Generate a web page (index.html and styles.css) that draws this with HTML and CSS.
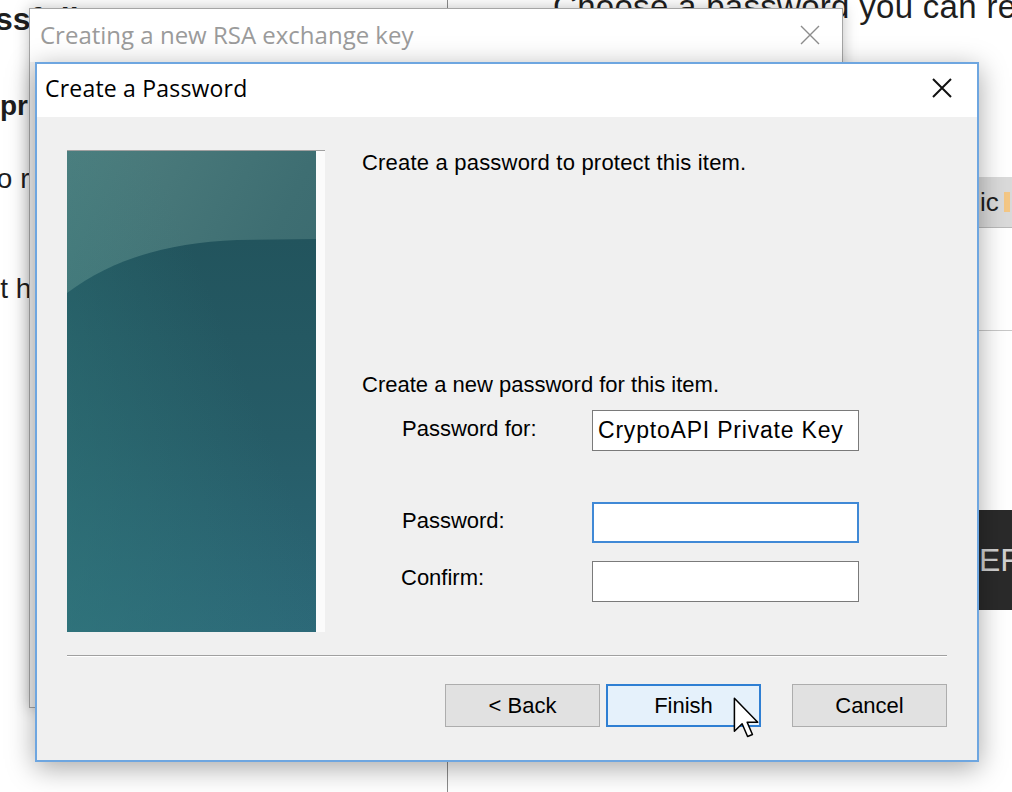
FILE: index.html
```html
<!doctype html>
<html>
    <head>
        <title>Create a Password</title>
        <meta charset="utf-8">
        <meta name="viewport" content="width=device-width">

        <link rel="stylesheet" href="styles.css">
    </head>

    <body>
        <div class="page">
            <div class="page-left">
                <h1 class="bg-title">ssfully</h1>
                <h2 class="bg-sub">pr</h2>
                <p class="bg-text bg-text-a">to r</p>
                <p class="bg-text bg-text-b">it h</p>
            </div>
            <div class="page-right">
                <p class="bg-lead">Choose a password you can remember</p>
                <div class="bg-tab">ic<span class="bg-tab-mark"></span></div>
                <div class="bg-rule"></div>
                <div class="bg-dark">EF</div>
            </div>
        </div>

        <!-- the inactive parent window -->
        <div class="window window-back">
            <div class="window-bar">
                <span class="window-title">Creating a new RSA exchange key</span>
                <svg class="window-close" width="22" height="22" viewBox="0 0 22 22">
                    <path d="M2 2 L20 20 M20 2 L2 20" stroke="#8d8d8d" stroke-width="1.4" fill="none"/>
                </svg>
            </div>
            <div class="window-body"></div>
        </div>

        <!-- the wizard page on top -->
        <div class="window window-front">
            <div class="window-bar">
                <span class="window-title">Create a Password</span>
                <svg class="window-close" width="22" height="22" viewBox="0 0 22 22">
                    <path d="M2 2 L20 20 M20 2 L2 20" stroke="#111" stroke-width="2" fill="none"/>
                </svg>
            </div>
            <div class="window-body wizard">
                <div class="wiz-main">
                    <div class="wiz-art">
                        <svg width="249" height="481" viewBox="0 0 249 481">
                            <defs>
                                <linearGradient id="artTop" x1="0" y1="0" x2="1" y2="1">
                                    <stop offset="0" stop-color="#4f7f7f"/>
                                    <stop offset="0.5" stop-color="#3e6e72"/>
                                    <stop offset="1" stop-color="#34646b"/>
                                </linearGradient>
                                <linearGradient id="artLow" x1="0" y1="0" x2="0" y2="1">
                                    <stop offset="0" stop-color="#22545d"/>
                                    <stop offset="0.5" stop-color="#265c67"/>
                                    <stop offset="1" stop-color="#2c6878"/>
                                </linearGradient>
                                <linearGradient id="artTint" x1="0" y1="1" x2="0.7" y2="0.45">
                                    <stop offset="0" stop-color="#327b7d" stop-opacity="0.55"/>
                                    <stop offset="1" stop-color="#327b7d" stop-opacity="0"/>
                                </linearGradient>
                            </defs>
                            <rect width="249" height="481" fill="url(#artTop)"/>
                            <path d="M0 142 C45 108 100 92 170 89 L249 88 V481 H0 Z" fill="url(#artLow)"/>
                            <rect width="249" height="481" fill="url(#artTint)"/>
                        </svg>
                    </div>
                    <div class="wiz-content">
                        <p class="wiz-intro">Create a password to protect this item.</p>
                        <p class="wiz-prompt">Create a new password for this item.</p>
                        <div class="wiz-form">
                            <div class="field">
                                <label class="field-label">Password for:</label>
                                <input class="field-input field-input-name" type="text" value="CryptoAPI Private Key">
                            </div>
                            <div class="field field-spaced">
                                <label class="field-label">Password:</label>
                                <input class="field-input field-input-focus" type="password">
                            </div>
                            <div class="field">
                                <label class="field-label field-label-low">Confirm:</label>
                                <input class="field-input" type="password">
                            </div>
                        </div>
                    </div>
                </div>
                <div class="wiz-sep"></div>
                <div class="wiz-buttons">
                    <button class="btn">&lt; Back</button>
                    <button class="btn btn-default">Finish</button>
                    <button class="btn btn-cancel">Cancel</button>
                </div>
            </div>
        </div>

        <svg class="cursor" width="29" height="44" viewBox="0 0 13 20">
            <path d="M1 1 V16 L4.5 12.6 L7 18.4 L9.2 17.5 L6.8 11.9 H11.6 Z" fill="#fff" stroke="#000" stroke-width="0.7" stroke-linejoin="round"/>
        </svg>
    </body>
</html>
```

FILE: styles.css
```css
body {
    margin: 0;
    width: 1012px;
    height: 792px;
    overflow: hidden;
    position: relative;
    background: #fff;
    color: #000;
    font-family: "Liberation Sans", Arial, sans-serif;
}

/* page behind the dialogs */
.page {
    display: grid;
    grid-template-columns: 448px 1fr;
    height: 792px;
}
.page-left {
    border-right: 1px solid #8c8c8c;
    overflow: hidden;
    color: #1e1e1e;
}
.page-right {
    overflow: hidden;
    display: flex;
    flex-direction: column;
    color: #1e1e1e;
}
.bg-title {
    font-size: 32px;
    line-height: 36px;
    margin: 1px 0 0;
    text-indent: -5px;
    white-space: nowrap;
}
.bg-sub {
    font-size: 28px;
    line-height: 32px;
    margin: 53px 0 0;
    white-space: nowrap;
}
.bg-text {
    font-size: 28px;
    line-height: 32px;
    margin: 0;
    white-space: nowrap;
}
.bg-text-a {
    margin-top: 41px;
    text-indent: -11px;
}
.bg-text-b {
    margin-top: 78px;
    text-indent: -6px;
}
.bg-lead {
    font-size: 33px;
    line-height: 36px;
    letter-spacing: 0.3px;
    margin: -11px 0 0;
    padding-left: 105px;
    white-space: nowrap;
}
.bg-tab {
    margin: 152px 0 0 527px;
    height: 50px;
    background: #dadada;
    border-bottom: 1px solid #b9b9b9;
    font-size: 26px;
    line-height: 50px;
    padding-left: 5px;
    display: flex;
    align-items: center;
    gap: 5px;
}
.bg-tab-mark {
    width: 6px;
    height: 20px;
    background: #f4c785;
}
.bg-rule {
    margin: 102px 0 0 527px;
    height: 1px;
    background: #c8c8c8;
}
.bg-dark {
    margin: 179px 0 0 527px;
    height: 100px;
    background: #2a2a2a;
    color: #d0d0d0;
    font-size: 32px;
    line-height: 100px;
    padding-left: 4px;
}

/* windows */
.window {
    position: absolute;
    box-sizing: border-box;
    display: flex;
    flex-direction: column;
    background: #f0f0f0;
}
.window-back {
    left: 29px;
    top: 8px;
    width: 814px;
    height: 700px;
    border: 1px solid #a5a5a5;
    box-shadow: 0 0 14px rgba(0, 0, 0, 0.25);
}
.window-front {
    left: 35px;
    top: 62px;
    width: 944px;
    height: 700px;
    border: 2px solid #6ea6e0;
    box-shadow: 0 6px 26px rgba(0, 0, 0, 0.35);
}
.window-bar {
    display: flex;
    align-items: center;
    justify-content: space-between;
    background: #fff;
    flex: none;
    box-sizing: border-box;
}
.window-back .window-bar {
    height: 53px;
    padding: 0 21px 2px 10px;
}
.window-front .window-bar {
    height: 53px;
    padding: 0 24px 6px 8px;
}
.window-title {
    font-family: "Open Sans", "Noto Sans", sans-serif;
    font-size: 23px;
    letter-spacing: 0.2px;
}
.window-back .window-title {
    color: #9b9b9b;
    font-size: 24px;
    letter-spacing: 0;
}
.window-body {
    flex: 1;
}

/* wizard page */
.wizard {
    padding: 33px 30px 0;
    display: flex;
    flex-direction: column;
}
.wiz-main {
    display: flex;
    height: 482px;
}
.wiz-art {
    flex: none;
    width: 258px;
    border-top: 1px solid #a0a0a0;
    background: #fbfbfb;
}
.wiz-art svg {
    display: block;
}
.wiz-content {
    margin-left: 37px;
    display: flex;
    flex-direction: column;
    font-size: 22px;
    line-height: 26px;
}
.wiz-intro {
    margin: 0;
    letter-spacing: 0.2px;
}
.wiz-prompt {
    margin: 196px 0 0;
}
.wiz-form {
    margin: 12px 0 0 40px;
    display: flex;
    flex-direction: column;
}
.field {
    display: grid;
    grid-template-columns: 190px 267px;
    align-items: center;
}
.field + .field {
    margin-top: 18px;
}
.field-spaced,
.field + .field-spaced {
    margin-top: 51px;
}
.field-label {
    padding-bottom: 4px;
}
.field-label-low {
    padding-bottom: 8px;
    margin-left: -1px;
}
.field-input {
    box-sizing: border-box;
    height: 41px;
    border: 1px solid #7a7a7a;
    background: #fff;
    font: inherit;
    font-size: 22px;
    padding: 0 5px;
    outline: none;
}
.field-input-name {
    font-size: 23px;
    letter-spacing: 0.8px;
}
.field-input-focus {
    border: 2px solid #4089d6;
}
.wiz-sep {
    margin-top: 23px;
    border-top: 1px solid #a0a0a0;
    border-bottom: 1px solid #fff;
}
.wiz-buttons {
    margin-top: 27px;
    display: flex;
    justify-content: flex-end;
    gap: 6px;
}
.btn {
    box-sizing: border-box;
    width: 155px;
    height: 43px;
    border: 1px solid #adadad;
    background: #e1e1e1;
    color: #000;
    font-family: "Liberation Sans", Arial, sans-serif;
    font-size: 22px;
    padding: 0;
}
.btn-default {
    border: 2px solid #2f7fd3;
    background: #e5f1fb;
}
.btn-cancel {
    margin-left: 25px;
}

.cursor {
    position: absolute;
    left: 732px;
    top: 696px;
}
```
